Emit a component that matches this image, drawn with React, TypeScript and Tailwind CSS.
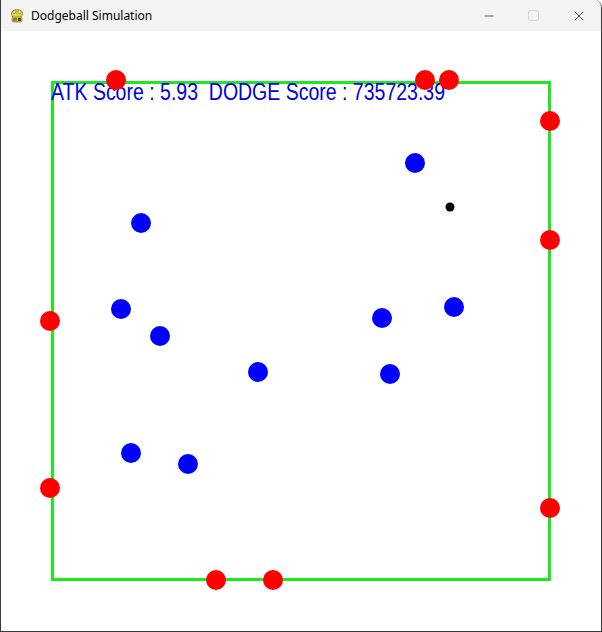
import { Minus, Square, X } from "lucide-react";

const RED = [
  [115, 49], [424, 49], [448, 49], [549, 90], [549, 209],
  [49, 290], [49, 457], [549, 477], [215, 549], [272, 549],
];

const BLUE = [
  [414, 132], [140, 192], [120, 278], [159, 305], [257, 341],
  [381, 287], [453, 276], [389, 343], [130, 422], [187, 433],
];

function PygameIcon() {
  return (
    <svg width="16" height="16" viewBox="0 0 16 16">
      <ellipse cx="8" cy="6" rx="5.5" ry="4.5" fill="#e8d43a" stroke="#a08a10" strokeWidth="0.8" />
      <circle cx="5.5" cy="4" r="1.6" fill="#fff" stroke="#6a5a10" strokeWidth="0.6" />
      <circle cx="10.5" cy="4" r="1.6" fill="#fff" stroke="#6a5a10" strokeWidth="0.6" />
      <rect x="3" y="9" width="10" height="5" rx="1.5" fill="#d9c23a" stroke="#8a7512" strokeWidth="0.7" />
      <rect x="4" y="10" width="4" height="3" fill="#7a7a7a" />
      <rect x="9" y="10" width="3" height="3" fill="#5a4a30" />
    </svg>
  );
}

export default function App() {
  return (
    <div className="w-[602px] h-[632px] flex flex-col bg-white border-l border-r border-b border-[#3c3c3c] rounded-tr-lg overflow-hidden">
      {/* Title bar */}
      <div className="h-[31px] flex items-center bg-[#f3f3f3] font-['Noto_Sans','Open_Sans',sans-serif]">
        <div className="pl-[8px] pr-[6px] flex items-center">
          <PygameIcon />
        </div>
        <span className="text-[12px] text-black leading-none">Dodgeball Simulation</span>
        <div className="ml-auto flex items-center h-full">
          <div className="w-[45px] h-full flex items-center justify-center text-[#1a1a1a]">
            <Minus size={14} strokeWidth={1.2} />
          </div>
          <div className="w-[45px] h-full flex items-center justify-center text-[#c4c4c4]">
            <Square size={13} strokeWidth={1.2} />
          </div>
          <div className="w-[45px] h-full flex items-center justify-center text-[#1a1a1a]">
            <X size={16} strokeWidth={1.2} />
          </div>
        </div>
      </div>

      {/* Client area */}
      <div className="w-[600px] h-[600px] bg-white">
        <svg width="600" height="600" viewBox="0 0 600 600">
          <rect x="51.5" y="51.5" width="497" height="497" fill="none" stroke="#1ee81e" strokeWidth="3" />
          <text
            x="50"
            y="69"
            fill="#0000e0"
            fontSize="23"
            fontFamily="'Liberation Sans', Arial, sans-serif"
            textLength="394"
            lengthAdjust="spacingAndGlyphs"
            xmlSpace="preserve"
          >
            {"ATK Score : 5.93\u00a0 DODGE Score : 735723.39"}
          </text>
          {BLUE.map(([x, y], i) => (
            <circle key={`b${i}`} cx={x} cy={y} r="10" fill="#0000ff" />
          ))}
          <circle cx="449" cy="176" r="4.5" fill="#000" />
          {RED.map(([x, y], i) => (
            <circle key={`r${i}`} cx={x} cy={y} r="10" fill="#ff0000" />
          ))}
        </svg>
      </div>
    </div>
  );
}
